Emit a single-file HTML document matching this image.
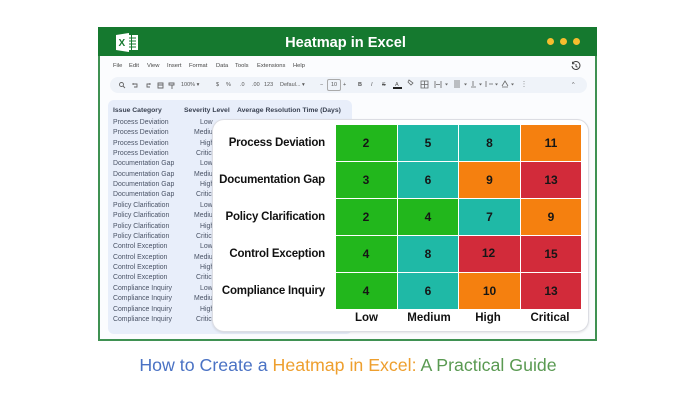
<!DOCTYPE html>
<html><head><meta charset="utf-8"><style>
html,body{margin:0;padding:0;background:#fff}
#p{position:relative;width:698px;height:400px;overflow:hidden;background:#fff;font-family:"Liberation Sans",sans-serif}
#p div{position:absolute;white-space:nowrap}
.m{font-size:5.8px;color:#444;top:62px;line-height:8px}
.t{font-size:5.5px;color:#555;top:81px;line-height:8px}
.h{font-size:6.8px;font-weight:bold;color:#3a4252;top:106px;line-height:9px}
.r{font-size:6.9px;color:#4a5366;line-height:9px;left:113px}
.l{font-size:11.5px;letter-spacing:-.2px;font-weight:bold;color:#111;text-align:right;width:120px;left:205px;line-height:14px}
.c{display:flex;align-items:center;justify-content:center;font-size:12px;font-weight:bold;color:#161616;height:36px}
.x{font-size:11.5px;font-weight:bold;color:#111;top:311px;line-height:14px;text-align:center}
</style></head><body><div id="p">
<div style="left:98px;top:27px;width:495px;height:310px;border:2px solid #3f9152;background:#fbfcfe"></div>
<div style="left:98px;top:27px;width:499px;height:29px;background:#15792f"></div>
<svg style="position:absolute;left:115px;top:32px" width="24" height="21" viewBox="0 0 24 21"><rect x="11" y="3" width="12" height="15" fill="#fff"/><path d="M13 6h8M13 9h8M13 12h8M13 15h8M16.500 3v15" stroke="#15792f" stroke-width="1"/><path d="M1 3L14 1V20L1 18Z" fill="#fff"/><text x="3.500" y="14" font-family="Liberation Sans" font-size="10" font-weight="bold" fill="#15792f">X</text></svg>
<div style="left:96px;width:499px;top:35px;text-align:center;font-size:14.6px;font-weight:bold;color:#fff;line-height:17px">Heatmap in Excel</div>
<div style="left:547px;top:38px;width:7px;height:7px;border-radius:50%;background:#f6bd2e"></div>
<div style="left:560px;top:38px;width:7px;height:7px;border-radius:50%;background:#f6bd2e"></div>
<div style="left:573px;top:38px;width:7px;height:7px;border-radius:50%;background:#f6bd2e"></div>
<div class="m" style="left:113px">File</div><div class="m" style="left:129px">Edit</div><div class="m" style="left:147px">View</div><div class="m" style="left:167px">Insert</div><div class="m" style="left:189px">Format</div><div class="m" style="left:216px">Data</div><div class="m" style="left:235px">Tools</div><div class="m" style="left:257px">Extensions</div><div class="m" style="left:293px">Help</div>
<svg style="position:absolute;left:571px;top:61px" width="10" height="10" viewBox="0 0 10 10" fill="none" stroke="#444" stroke-width="1"><path d="M1.500 2.500A4 4 0 1 1 1 5M1.500 .8v2h2M5 3v2.300l1.500 1"/></svg>
<div style="left:110px;top:77px;width:477px;height:16px;border-radius:8px;background:#eff3f9"></div>
<svg style="position:absolute;left:118px;top:81px" width="60" height="9" viewBox="0 0 60 9" fill="none" stroke="#666" stroke-width=".9"><circle cx="3.500" cy="3.500" r="2"/><path d="M5 5l2 2M15 3h4v3h-3M15 2v2M32 3h-3v3h3M32 2v2M40 2h5v5h-5zM40 4h5M51 2h5v2h-5zM54 4v4"/></svg>
<div class="t" style="left:181px">100% ▾</div><div class="t" style="left:216px">$</div><div class="t" style="left:226px">%</div><div class="t" style="left:240px">.0</div><div class="t" style="left:252px">.00</div><div class="t" style="left:264px">123</div><div class="t" style="left:280px">Defaul... ▾</div><div class="t" style="left:320px">−</div>
<div style="left:327px;top:79px;width:12px;height:10px;border:1px solid #aaa;border-radius:2px;font-size:5.5px;color:#555;text-align:center;line-height:10px">10</div>
<div class="t" style="left:343px">+</div><div class="t" style="left:358px;font-weight:bold">B</div><div class="t" style="left:371px;font-style:italic">I</div><div class="t" style="left:382px;text-decoration:line-through">S</div>
<div class="t" style="left:395px">A</div><div style="left:393px;top:87px;width:9px;height:1.500px;background:#222"></div>
<svg style="position:absolute;left:405px;top:79px" width="125" height="10" viewBox="0 0 125 10" fill="none" stroke="#666" stroke-width=".8"><path d="M4 1l4 3-2 2-3-3zM16 2h7v7h-7zM16 5.500h7M19.500 2v7M30 2v7M36 2v7M31 5.500h4M49 2h6M49 4h6M49 6h6M49 8h6M68 2v5M66 8h5M81 2v6M84 5h4M97 8h6M119 2v.8M119 4.500v.8M119 7v.8"/><path d="M40 4.500h3l-1.500 2zM59 4.500h3l-1.500 2zM74 4.500h3l-1.500 2zM90 4.500h3l-1.500 2zM106 4.500h3l-1.500 2z" fill="#666" stroke="none"/><path d="M97 7l3-5 3 5"/></svg>
<div class="t" style="left:572px">^</div>
<div style="left:108px;top:100px;width:244px;height:234px;background:#e8eefa;border-radius:6px"></div>
<div class="h" style="left:113px">Issue Category</div><div class="h" style="left:184px">Severity Level</div><div class="h" style="left:237px">Average Resolution Time (Days)</div>
<div class="r" style="top:118px">Process Deviation</div><div class="r" style="top:128px">Process Deviation</div><div class="r" style="top:139px">Process Deviation</div><div class="r" style="top:149px">Process Deviation</div>
<div class="r" style="top:159px">Documentation Gap</div><div class="r" style="top:170px">Documentation Gap</div><div class="r" style="top:180px">Documentation Gap</div><div class="r" style="top:190px">Documentation Gap</div>
<div class="r" style="top:201px">Policy Clarification</div><div class="r" style="top:211px">Policy Clarification</div><div class="r" style="top:222px">Policy Clarification</div><div class="r" style="top:232px">Policy Clarification</div>
<div class="r" style="top:242px">Control Exception</div><div class="r" style="top:253px">Control Exception</div><div class="r" style="top:263px">Control Exception</div><div class="r" style="top:273px">Control Exception</div>
<div class="r" style="top:284px">Compliance Inquiry</div><div class="r" style="top:294px">Compliance Inquiry</div><div class="r" style="top:305px">Compliance Inquiry</div><div class="r" style="top:315px">Compliance Inquiry</div>
<div class="r" style="left:200px;top:118px">Low</div><div class="r" style="left:194px;top:128px">Medium</div><div class="r" style="left:200px;top:139px">High</div><div class="r" style="left:196px;top:149px">Critical</div>
<div class="r" style="left:200px;top:159px">Low</div><div class="r" style="left:194px;top:170px">Medium</div><div class="r" style="left:200px;top:180px">High</div><div class="r" style="left:196px;top:190px">Critical</div>
<div class="r" style="left:200px;top:201px">Low</div><div class="r" style="left:194px;top:211px">Medium</div><div class="r" style="left:200px;top:222px">High</div><div class="r" style="left:196px;top:232px">Critical</div>
<div class="r" style="left:200px;top:242px">Low</div><div class="r" style="left:194px;top:253px">Medium</div><div class="r" style="left:200px;top:263px">High</div><div class="r" style="left:196px;top:273px">Critical</div>
<div class="r" style="left:200px;top:284px">Low</div><div class="r" style="left:194px;top:294px">Medium</div><div class="r" style="left:200px;top:305px">High</div><div class="r" style="left:196px;top:315px">Critical</div>
<div style="left:212px;top:119px;width:375px;height:211px;background:#fff;border:1px solid #dcdde3;border-radius:12px;box-shadow:0 1px 2px rgba(0,0,0,.1)"></div>
<div class="l" style="top:136px">Process Deviation</div><div class="l" style="top:173px">Documentation Gap</div><div class="l" style="top:210px">Policy Clarification</div><div class="l" style="top:247px">Control Exception</div><div class="l" style="top:284px">Compliance Inquiry</div>
<div class="c" style="left:336px;top:125px;width:61px;padding-right:1px;box-sizing:border-box;background:#22b71c">2</div><div class="c" style="left:398px;top:125px;width:60px;background:#1fb9a6">5</div><div class="c" style="left:459px;top:125px;width:61px;background:#1fb9a6">8</div><div class="c" style="left:521px;top:125px;width:60px;background:#f5800f">11</div>
<div class="c" style="left:336px;top:162px;width:61px;padding-right:1px;box-sizing:border-box;background:#22b71c">3</div><div class="c" style="left:398px;top:162px;width:60px;background:#1fb9a6">6</div><div class="c" style="left:459px;top:162px;width:61px;background:#f5800f">9</div><div class="c" style="left:521px;top:162px;width:60px;background:#d22b3a">13</div>
<div class="c" style="left:336px;top:199px;width:61px;padding-right:1px;box-sizing:border-box;background:#22b71c">2</div><div class="c" style="left:398px;top:199px;width:60px;background:#22b71c">4</div><div class="c" style="left:459px;top:199px;width:61px;background:#1fb9a6">7</div><div class="c" style="left:521px;top:199px;width:60px;background:#f5800f">9</div>
<div class="c" style="left:336px;top:236px;width:61px;padding-right:1px;box-sizing:border-box;background:#22b71c">4</div><div class="c" style="left:398px;top:236px;width:60px;background:#1fb9a6">8</div><div class="c" style="left:459px;top:236px;width:61px;padding:0 2px 2px 0;box-sizing:border-box;background:#d22b3a">12</div><div class="c" style="left:521px;top:236px;width:60px;background:#d22b3a">15</div>
<div class="c" style="left:336px;top:273px;width:61px;padding-right:1px;box-sizing:border-box;background:#22b71c">4</div><div class="c" style="left:398px;top:273px;width:60px;background:#1fb9a6">6</div><div class="c" style="left:459px;top:273px;width:61px;background:#f5800f">10</div><div class="c" style="left:521px;top:273px;width:60px;background:#d22b3a">13</div>
<div class="x" style="left:336px;width:61px">Low</div><div class="x" style="left:399px;width:60px">Medium</div><div class="x" style="left:458px;width:60px">High</div><div class="x" style="left:520px;width:60px">Critical</div>
<div style="left:-1px;width:698px;top:355px;text-align:center;font-size:17.75px;line-height:21px;color:#4a72c4"><span>How to Create a </span><span style="color:#ee9f2e">Heatmap in Excel:</span><span style="color:#5a9a52"> A Practical Guide</span></div>
</div></body></html>
